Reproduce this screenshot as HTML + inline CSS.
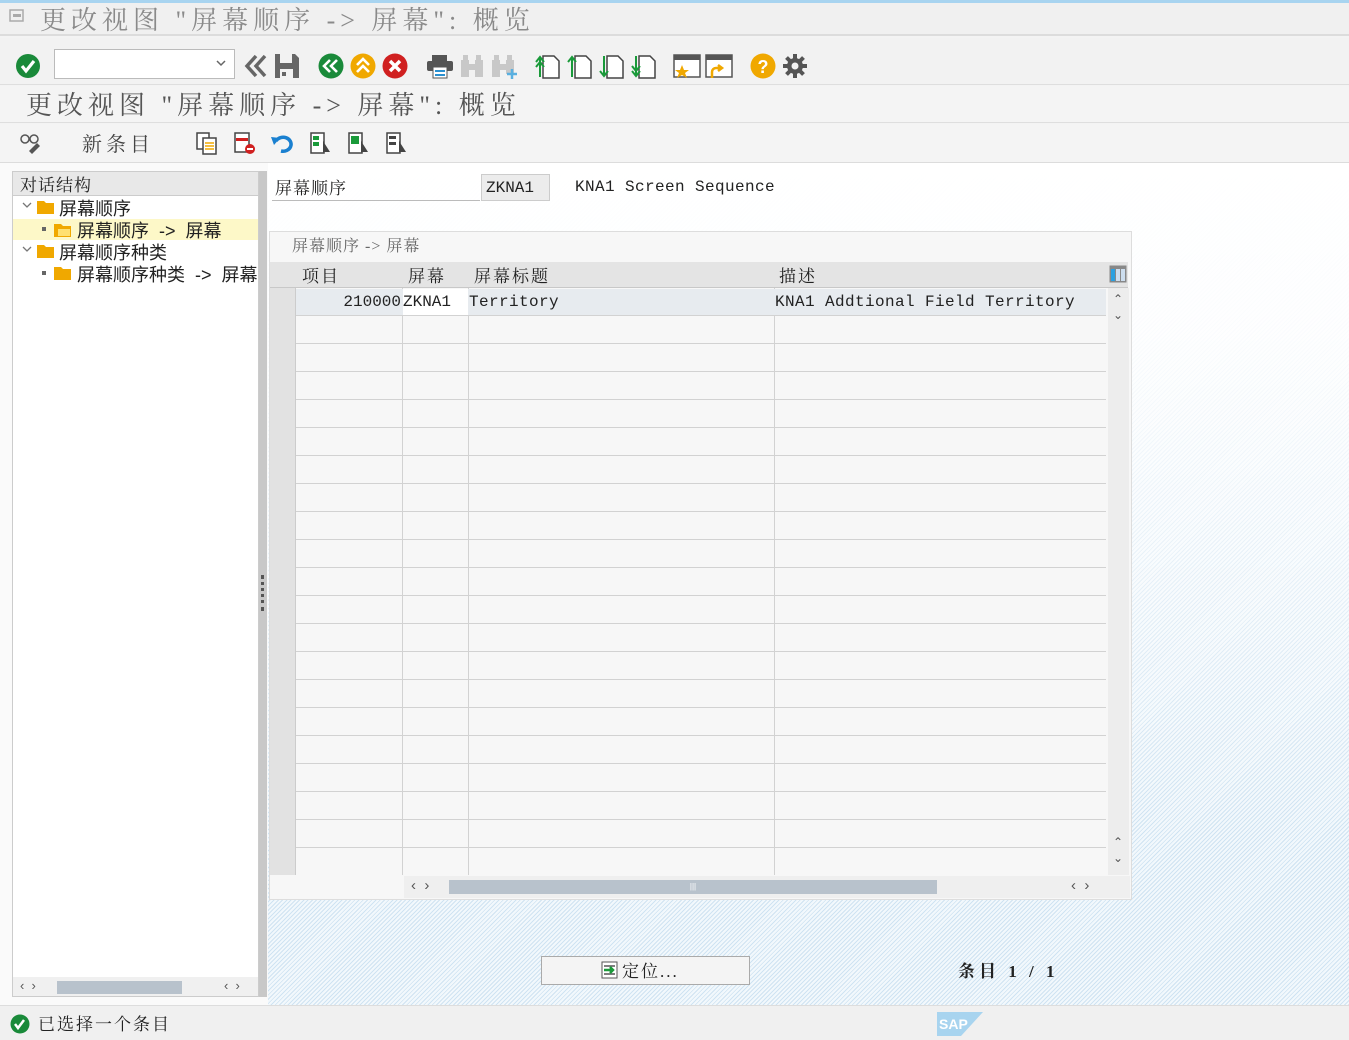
<!DOCTYPE html>
<html><head><meta charset="utf-8">
<style>
*{margin:0;padding:0;box-sizing:border-box}
body{width:1349px;height:1040px;position:relative;overflow:hidden;background:#f3f3f3;font-family:"Liberation Sans","Noto Sans CJK SC",sans-serif;color:#222}
.abs{position:absolute}
.cjk{font-family:"Liberation Sans","Noto Sans CJK SC",sans-serif}
.serif{font-family:"Liberation Serif","Noto Serif CJK SC",serif}
.mono{font-family:"Liberation Mono","Noto Sans CJK SC",monospace}
.ic{position:absolute}
</style></head><body>
<!-- title bar -->
<div class="abs" style="left:0;top:0;width:1349px;height:3px;background:#a8d4f0"></div>
<div class="abs" style="left:0;top:3px;width:1349px;height:33px;background:#f0f0f0;border-bottom:2px solid #dcdcdc"></div>
<svg class="ic" style="left:9px;top:9px" width="16" height="14"><rect x="1" y="1" width="13" height="11" fill="none" stroke="#aaa" stroke-width="1.5"/><rect x="4" y="5" width="8" height="3" fill="#aaa"/></svg>
<div class="abs serif" style="left:40px;top:0px;font-size:26px;color:#8a8a8a;letter-spacing:5px;white-space:nowrap">更改视图 "屏幕顺序 -&gt; 屏幕": 概览</div>

<!-- toolbar -->
<div class="abs" style="left:0;top:38px;width:1349px;height:47px;background:#f2f2f2;border-bottom:1px solid #dedede"></div>
<svg class="ic" style="left:15px;top:53px" width="26" height="26"><circle cx="13" cy="13" r="12" fill="#1a8a3a"/><path d="M7 13l4 5 8-10" stroke="#fff" stroke-width="3.2" fill="none"/></svg>
<div class="abs" style="left:54px;top:49px;width:181px;height:30px;background:#fff;border:1px solid #bbb"></div>
<svg class="ic" style="left:216px;top:60px" width="10" height="8"><path d="M1 1l4 4 4-4" stroke="#666" stroke-width="1.5" fill="none"/></svg>
<svg class="ic" style="left:243px;top:53px" width="26" height="26"><path d="M13 3L4 13l9 10M22 3l-9 10 9 10" stroke="#666" stroke-width="3.5" fill="none"/></svg>
<svg class="ic" style="left:274px;top:53px" width="26" height="26"><path d="M1 1h20l4 4v20H1z" fill="#666"/><rect x="6" y="1" width="12" height="9" fill="#f2f2f2"/><rect x="6" y="16" width="13" height="9" fill="#f2f2f2"/><rect x="8" y="19" width="4" height="4" fill="#666"/></svg>
<svg class="ic" style="left:318px;top:53px" width="26" height="26"><circle cx="13" cy="13" r="12.5" fill="#1a8a3a"/><path d="M12 7l-6 6 6 6M19 7l-6 6 6 6" stroke="#fff" stroke-width="2.6" fill="none"/></svg>
<svg class="ic" style="left:350px;top:53px" width="26" height="26"><circle cx="13" cy="13" r="12.5" fill="#f0a800"/><path d="M7 12l6-6 6 6M7 19l6-6 6 6" stroke="#fff" stroke-width="2.6" fill="none"/></svg>
<svg class="ic" style="left:382px;top:53px" width="26" height="26"><circle cx="13" cy="13" r="12.5" fill="#d02020"/><path d="M8 8l10 10M18 8L8 18" stroke="#fff" stroke-width="3.5"/></svg>
<svg class="ic" style="left:426px;top:53px" width="28" height="26"><rect x="6" y="2" width="15" height="6" fill="#555"/><rect x="1" y="8" width="26" height="10" rx="2" fill="#555"/><rect x="7" y="14" width="14" height="11" fill="#fff" stroke="#555"/><rect x="9" y="17" width="10" height="2" fill="#2a90d0"/><rect x="9" y="21" width="10" height="2" fill="#2a90d0"/></svg>
<svg class="ic" style="left:459px;top:54px" width="26" height="24"><path d="M2 6h8v17H2zM16 6h8v17h-8zM4 1h5v6H4zM17 1h5v6h-5zM9 10h8v6H9z" fill="#c8c8c8"/></svg>
<svg class="ic" style="left:490px;top:54px" width="28" height="26"><path d="M2 6h8v17H2zM16 6h8v14h-8zM4 1h5v6H4zM17 1h5v6h-5zM9 10h8v6H9z" fill="#c8c8c8"/><path d="M22 15v10M17 20h10" stroke="#5ab0e0" stroke-width="2.5"/></svg>
<svg class="ic" style="left:534px;top:53px" width="28" height="26"><path d="M9 3h11l5 5v17H9z" fill="#fff" stroke="#444" stroke-width="1.5"/><path d="M6 24V4M2 9l4-5 4 5M2 14l4-5 4 5" stroke="#1a9a3a" stroke-width="2" fill="none"/></svg>
<svg class="ic" style="left:566px;top:53px" width="28" height="26"><path d="M9 3h11l5 5v17H9z" fill="#fff" stroke="#444" stroke-width="1.5"/><path d="M6 24V4M2 9l4-5 4 5" stroke="#1a9a3a" stroke-width="2" fill="none"/></svg>
<svg class="ic" style="left:598px;top:53px" width="28" height="26"><path d="M9 3h11l5 5v17H9z" fill="#fff" stroke="#444" stroke-width="1.5"/><path d="M6 3v20M2 18l4 5 4-5" stroke="#1a9a3a" stroke-width="2" fill="none"/></svg>
<svg class="ic" style="left:630px;top:53px" width="28" height="26"><path d="M9 3h11l5 5v17H9z" fill="#fff" stroke="#444" stroke-width="1.5"/><path d="M6 3v20M2 13l4 5 4-5M2 18l4 5 4-5" stroke="#1a9a3a" stroke-width="2" fill="none"/></svg>
<svg class="ic" style="left:673px;top:53px" width="28" height="26"><path d="M1 2h26v22H1z" fill="#fff" stroke="#555" stroke-width="1.5"/><rect x="1" y="2" width="26" height="5" fill="#555"/><path d="M9 12l2 5h5l-4 3 2 5-5-3-5 3 2-5-4-3h5z" fill="#f0a800"/></svg>
<svg class="ic" style="left:705px;top:53px" width="28" height="26"><path d="M1 2h26v22H1z" fill="#fff" stroke="#555" stroke-width="1.5"/><rect x="1" y="2" width="26" height="5" fill="#555"/><path d="M7 25v-6a4 4 0 0 1 4-4h5M13 12l4 3-4 3" stroke="#f0a800" stroke-width="2.5" fill="none"/></svg>
<svg class="ic" style="left:750px;top:53px" width="26" height="26"><circle cx="13" cy="13" r="12.5" fill="#f0a800"/><text x="13" y="20" text-anchor="middle" font-family="Liberation Sans" font-weight="bold" font-size="18" fill="#fff">?</text></svg>
<svg class="ic" style="left:782px;top:53px" width="26" height="26"><g fill="#555"><circle cx="13" cy="13" r="8"/><rect x="11" y="1" width="4" height="24"/><rect x="1" y="11" width="24" height="4"/><rect x="11" y="1" width="4" height="24" transform="rotate(45 13 13)"/><rect x="11" y="1" width="4" height="24" transform="rotate(-45 13 13)"/></g><circle cx="13" cy="13" r="3.5" fill="#f2f2f2"/></svg>

<!-- title 2 -->
<div class="abs" style="left:0;top:86px;width:1349px;height:37px;background:#f4f4f4;border-bottom:1px solid #dedede"></div>
<div class="abs serif" style="left:26px;top:85px;font-size:26px;color:#555;letter-spacing:5px;white-space:nowrap">更改视图 "屏幕顺序 -&gt; 屏幕": 概览</div>

<!-- app toolbar -->
<div class="abs" style="left:0;top:124px;width:1349px;height:39px;background:#f4f4f4;border-bottom:1px solid #dcdcdc"></div>
<svg class="ic" style="left:19px;top:131px" width="24" height="24"><circle cx="6" cy="8" r="4" fill="none" stroke="#555" stroke-width="1.5"/><circle cx="15" cy="8" r="4" fill="none" stroke="#555" stroke-width="1.5"/><path d="M10 20l8-8 3 3-8 8z" fill="#555"/></svg>
<div class="abs serif" style="left:82px;top:128px;font-size:20px;color:#444;letter-spacing:4px">新条目</div>
<svg class="ic" style="left:195px;top:131px" width="24" height="24"><rect x="2" y="2" width="12" height="16" fill="#fff" stroke="#444" stroke-width="1.5"/><rect x="8" y="7" width="13" height="16" fill="#fff" stroke="#444" stroke-width="1.5"/><path d="M10 12h9M10 15h9M10 18h9" stroke="#f0a800" stroke-width="1.5"/></svg>
<svg class="ic" style="left:233px;top:131px" width="24" height="24"><rect x="2" y="2" width="14" height="19" fill="#fff" stroke="#444" stroke-width="1.5"/><rect x="3" y="7" width="12" height="3" fill="#d02020"/><circle cx="17" cy="18" r="5" fill="#d02020"/><path d="M14 18h6" stroke="#fff" stroke-width="2"/></svg>
<svg class="ic" style="left:270px;top:131px" width="24" height="24"><path d="M6 10a8 7 0 1 1 5 10" stroke="#1a80d0" stroke-width="3.5" fill="none"/><path d="M1 6l9 1-6 7z" fill="#1a80d0"/></svg>
<svg class="ic" style="left:309px;top:131px" width="24" height="24"><rect x="2" y="2" width="13" height="20" fill="#fff" stroke="#444" stroke-width="1.5"/><rect x="4" y="5" width="6" height="4" fill="#1a9a3a"/><rect x="4" y="11" width="6" height="4" fill="#1a9a3a"/><path d="M14 10l7 11h-7z" fill="#444"/></svg>
<svg class="ic" style="left:347px;top:131px" width="24" height="24"><rect x="2" y="2" width="13" height="20" fill="#fff" stroke="#444" stroke-width="1.5"/><rect x="4" y="5" width="8" height="8" fill="#1a9a3a"/><path d="M14 10l7 11h-7z" fill="#444"/></svg>
<svg class="ic" style="left:385px;top:131px" width="24" height="24"><rect x="2" y="2" width="13" height="20" fill="#fff" stroke="#444" stroke-width="1.5"/><rect x="4" y="5" width="7" height="3" fill="#444"/><rect x="4" y="11" width="7" height="3" fill="#444"/><path d="M14 10l7 11h-7z" fill="#444"/></svg>

<!-- left panel -->
<div class="abs" style="left:0;top:163px;width:268px;height:842px;background:#fafafa"></div>
<div class="abs" style="left:12px;top:171px;width:247px;height:826px;background:#fff;border:1px solid #ccc"></div>
<div class="abs" style="left:13px;top:172px;width:245px;height:24px;background:#e8e8e8;border-bottom:1px solid #ccc"></div>
<div class="abs serif" style="left:20px;top:171px;font-size:17px;color:#222;letter-spacing:1px">对话结构</div>
<div class="abs" style="left:13px;top:219px;width:245px;height:21px;background:#fdf8c8"></div>
<svg class="ic" style="left:22px;top:202px" width="10" height="8"><path d="M1 1l4 4 4-4" stroke="#777" stroke-width="1.3" fill="none"/></svg>
<svg class="ic" style="left:36px;top:199px" width="19" height="16"><path d="M1 2h7l2 2h8v11H1z" fill="#f0a800"/></svg>
<div class="abs cjk" style="left:59px;top:195px;font-size:18px">屏幕顺序</div>
<div class="abs" style="left:42px;top:227px;width:4px;height:4px;background:#666"></div>
<svg class="ic" style="left:53px;top:222px" width="19" height="16"><path d="M1 2h7l2 2h8v11H1z" fill="#f0a800"/><path d="M5 7h12v7H5z" fill="#ffe070"/></svg>
<div class="abs cjk" style="left:77px;top:217px;font-size:18px;white-space:nowrap">屏幕顺序 &nbsp;-&gt; &nbsp;屏幕</div>
<svg class="ic" style="left:22px;top:246px" width="10" height="8"><path d="M1 1l4 4 4-4" stroke="#777" stroke-width="1.3" fill="none"/></svg>
<svg class="ic" style="left:36px;top:243px" width="19" height="16"><path d="M1 2h7l2 2h8v11H1z" fill="#f0a800"/></svg>
<div class="abs cjk" style="left:59px;top:239px;font-size:18px">屏幕顺序种类</div>
<div class="abs" style="left:42px;top:271px;width:4px;height:4px;background:#666"></div>
<svg class="ic" style="left:53px;top:265px" width="19" height="16"><path d="M1 2h7l2 2h8v11H1z" fill="#f0a800"/></svg>
<div class="abs" style="left:77px;top:261px;width:180px;height:24px;overflow:hidden"><div class="cjk" style="font-size:18px;white-space:nowrap">屏幕顺序种类 &nbsp;-&gt; &nbsp;屏幕</div></div>
<div class="abs" style="left:13px;top:977px;width:245px;height:19px;background:#f0f0f0"></div>
<div class="abs" style="left:57px;top:981px;width:125px;height:13px;background:#b8c2cc"></div>
<div class="abs" style="left:20px;top:978px;font-size:13px;color:#555">‹ &nbsp;›</div>
<div class="abs" style="left:224px;top:978px;font-size:13px;color:#555">‹ &nbsp;›</div>
<div class="abs" style="left:259px;top:171px;width:8px;height:826px;background:#c8c8c8"></div>
<div class="abs" style="left:261px;top:575px;width:3px;height:36px;border-left:3px dotted #555"></div>

<!-- right content background -->
<div class="abs" style="left:268px;top:163px;width:1081px;height:842px;background:repeating-linear-gradient(135deg,#cfe3f2 0 1px,#f2f8fc 1px 3px)"></div>
<div class="abs" style="left:268px;top:163px;width:1081px;height:842px;background:linear-gradient(to bottom,rgba(255,255,255,1) 0%,rgba(255,255,255,.9) 20%,rgba(255,255,255,.4) 55%,rgba(255,255,255,0) 80%)"></div>

<!-- header fields -->
<div class="abs" style="left:272px;top:175px;width:208px;height:26px;border-bottom:1px solid #bbb"></div>
<div class="abs serif" style="left:275px;top:174px;font-size:17px;letter-spacing:1px">屏幕顺序</div>
<div class="abs mono" style="left:481px;top:174px;width:69px;height:27px;background:#ececec;border:1px solid #ccc;font-size:16px;padding:4px 0 0 4px">ZKNA1</div>
<div class="abs mono" style="left:575px;top:178px;font-size:16px;white-space:nowrap;letter-spacing:0.4px">KNA1 Screen Sequence</div>

<!-- table box -->
<div class="abs" style="left:269px;top:231px;width:863px;height:669px;background:#f7f7f7;border:1px solid #ddd"></div>
<div class="abs serif" style="left:292px;top:233px;font-size:16px;color:#666;white-space:nowrap;letter-spacing:1px">屏幕顺序 -&gt; 屏幕</div>
<div class="abs" style="left:270px;top:262px;width:858px;height:26px;background:#e4e4e4;border-bottom:1px solid #c8c8c8"></div>
<div class="abs serif" style="left:302px;top:262px;font-size:17px;letter-spacing:2px">项目</div>
<div class="abs serif" style="left:408px;top:262px;font-size:17px;letter-spacing:2px">屏幕</div>
<div class="abs serif" style="left:474px;top:262px;font-size:17px;letter-spacing:2px">屏幕标题</div>
<div class="abs serif" style="left:779px;top:262px;font-size:17px;letter-spacing:2px">描述</div>
<svg class="ic" style="left:1109px;top:265px" width="18" height="18"><rect x="0.5" y="0.5" width="17" height="17" fill="#888"/><rect x="2" y="4" width="4" height="12" fill="#2aa0e0"/><rect x="7" y="4" width="4" height="12" fill="#cde"/><rect x="12" y="4" width="4" height="12" fill="#cde"/></svg>
<div class="abs" style="left:270px;top:288px;width:26px;height:587px;background:#e2e2e2;border-right:1px solid #ccc"></div>
<div class="abs" style="left:296px;top:288px;width:810px;height:587px;background:
repeating-linear-gradient(to bottom,transparent 0 27px,#d2d2d2 27px 28px),
linear-gradient(to right,transparent 106px,#d2d2d2 106px 107px,transparent 107px 172px,#d2d2d2 172px 173px,transparent 173px 478px,#d2d2d2 478px 479px,transparent 479px)"></div>
<div class="abs" style="left:296px;top:289px;width:810px;height:26px;background:#e7ebef"></div>
<div class="abs" style="left:403px;top:289px;width:65px;height:26px;background:#fff"></div>
<div class="abs mono" style="left:296px;top:293px;width:105px;text-align:right;font-size:16px">210000</div>
<div class="abs mono" style="left:403px;top:293px;font-size:16px">ZKNA1</div>
<div class="abs mono" style="left:469px;top:293px;font-size:16px;letter-spacing:0.4px">Territory</div>
<div class="abs mono" style="left:775px;top:293px;font-size:16px;white-space:nowrap;letter-spacing:0.4px">KNA1 Addtional Field Territory</div>
<div class="abs" style="left:1108px;top:288px;width:21px;height:587px;background:#ededed"></div>
<div class="abs" style="left:1113px;top:291px;font-size:12px;color:#555;line-height:16px">⌃<br>⌄</div>
<div class="abs" style="left:1113px;top:834px;font-size:12px;color:#555;line-height:16px">⌃<br>⌄</div>
<div class="abs" style="left:404px;top:876px;width:726px;height:22px;background:#efefef"></div>
<div class="abs" style="left:449px;top:880px;width:488px;height:14px;background:#b8c2cc;text-align:center;font-size:8px;color:#fff;line-height:14px">|||</div>
<div class="abs" style="left:411px;top:877px;font-size:15px;color:#555">‹ &nbsp;›</div>
<div class="abs" style="left:1071px;top:877px;font-size:15px;color:#555">‹ &nbsp;›</div>

<!-- position button -->
<div class="abs" style="left:541px;top:956px;width:209px;height:29px;background:#f4f4f4;border:1px solid #aaa"></div>
<svg class="ic" style="left:601px;top:961px" width="18" height="18"><rect x="1" y="1" width="15" height="16" fill="#fff" stroke="#555"/><path d="M3 5h11M3 13h11" stroke="#555" stroke-width="1.5"/><path d="M3 9h8M9 6l3 3-3 3" stroke="#1a9a3a" stroke-width="2.5" fill="none"/></svg>
<div class="abs serif" style="left:622px;top:957px;font-size:17px;letter-spacing:2px">定位...</div>
<div class="abs serif" style="left:958px;top:957px;font-size:17px;letter-spacing:4px;white-space:nowrap;font-weight:bold">条目 1 / 1</div>

<!-- status bar -->
<div class="abs" style="left:0;top:1005px;width:1349px;height:35px;background:#f0f0f0;border-top:1px solid #ddd"></div>
<svg class="ic" style="left:10px;top:1014px" width="20" height="20"><circle cx="10" cy="10" r="9.5" fill="#1a8a3a"/><path d="M5 10l3 4 6-8" stroke="#fff" stroke-width="2.5" fill="none"/></svg>
<div class="abs serif" style="left:38px;top:1010px;font-size:17px;letter-spacing:2px">已选择一个条目</div>
<svg class="ic" style="left:937px;top:1012px" width="46" height="24"><path d="M0 0h46L24 24H0z" fill="#a8d4ef"/><text x="2" y="17" font-family="Liberation Sans" font-weight="bold" font-size="14" fill="#fff">SAP</text></svg>
</body></html>
